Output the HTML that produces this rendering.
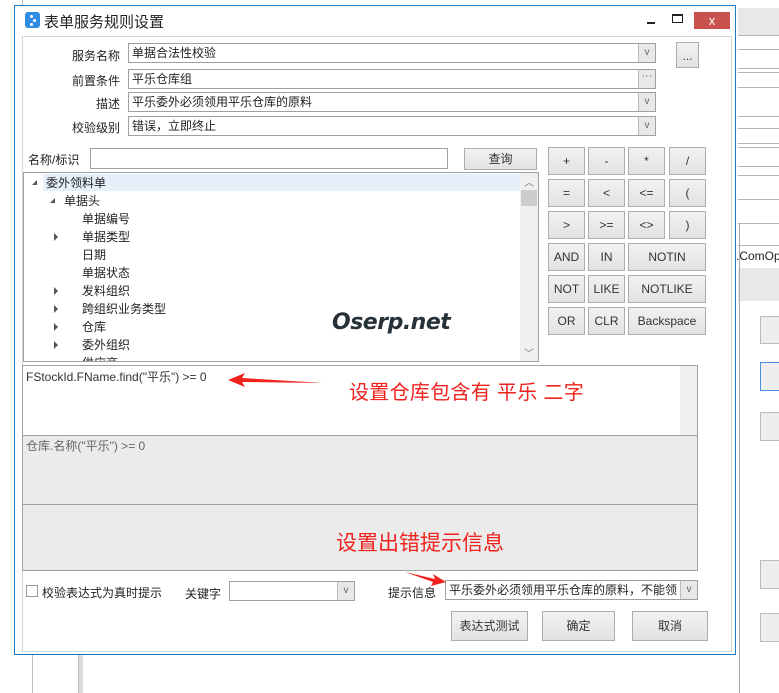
<!DOCTYPE html>
<html><head><meta charset="utf-8"><style>
*{box-sizing:border-box;margin:0;padding:0}
body{width:779px;height:693px;position:relative;overflow:hidden;background:#fff;font-family:"Liberation Sans","Noto Sans CJK SC",sans-serif;font-size:12px;color:#222}
.a{position:absolute}
.btn{position:absolute;border:1px solid #adadad;background:linear-gradient(#f2f2f2,#e2e2e2);text-align:center;font-size:12px;color:#333}
.in{position:absolute;border:1px solid #a0a0a0;background:#fff;font-size:12px;padding-left:3px;line-height:18px}
.dd{position:absolute;right:0;top:0;bottom:0;width:17px;background:#e8e8e8;border-left:1px solid #bbb;color:#666;font-size:10px;text-align:center;line-height:18px}
.lbl{position:absolute;font-size:12px;text-align:right;width:70px}
.tr{position:absolute;font-size:12px;line-height:18px}
.tri{position:absolute;width:0;height:0;border-top:4px solid transparent;border-bottom:4px solid transparent;border-left:4px solid #555}
.hl{position:absolute;height:1px;background:#b5b5b5}
.red{position:absolute;color:#f0221e}
</style></head><body>
<div class="a" style="left:22px;top:0;width:1px;height:8px;background:#bbb"></div>
<div class="a" style="left:32px;top:655px;width:1px;height:38px;background:#bbb"></div>
<div class="a" style="left:78px;top:655px;width:5px;height:38px;background:#ddd;border-left:1px solid #bbb"></div>
<div class="a" style="left:738px;top:8px;width:41px;height:28px;background:#e8e8e8"></div>
<div class="hl" style="left:738px;top:35px;width:41px"></div>
<div class="hl" style="left:738px;top:49px;width:41px"></div>
<div class="hl" style="left:738px;top:68px;width:41px"></div>
<div class="hl" style="left:738px;top:72px;width:41px"></div>
<div class="hl" style="left:738px;top:87px;width:41px"></div>
<div class="hl" style="left:738px;top:116px;width:41px"></div>
<div class="hl" style="left:738px;top:128px;width:41px"></div>
<div class="hl" style="left:738px;top:143px;width:41px"></div>
<div class="hl" style="left:738px;top:147px;width:41px"></div>
<div class="hl" style="left:738px;top:166px;width:41px"></div>
<div class="hl" style="left:738px;top:175px;width:41px"></div>
<div class="hl" style="left:738px;top:199px;width:41px"></div>
<div class="hl" style="left:738px;top:223px;width:41px"></div>
<div class="hl" style="left:738px;top:245px;width:41px"></div>
<div class="a" style="left:736px;top:249px;font-size:12px;color:#222">.ComOp</div>
<div class="a" style="left:738px;top:268px;width:41px;height:33px;background:#e8e8e8"></div>
<div class="a" style="left:739px;top:223px;width:1px;height:470px;background:#aaa"></div>
<div class="a" style="left:760px;top:316px;width:30px;height:28px;border:1px solid #bbb;background:#eee"></div>
<div class="a" style="left:760px;top:362px;width:30px;height:29px;border:1px solid #4a90e2;background:#eee"></div>
<div class="a" style="left:760px;top:412px;width:30px;height:29px;border:1px solid #bbb;background:#eee"></div>
<div class="a" style="left:760px;top:560px;width:30px;height:29px;border:1px solid #bbb;background:#eee"></div>
<div class="a" style="left:760px;top:613px;width:30px;height:29px;border:1px solid #bbb;background:#eee"></div>

<div class="a" style="left:14px;top:5px;width:722px;height:650px;border:1px solid #1979ca;background:#fff"></div>
<div class="a" style="left:25px;top:12px;width:15px;height:16px;background:#2f8de4;border-radius:3px"></div>
<div class="a" style="left:30px;top:15px;width:3px;height:3px;background:#fff;border-radius:2px"></div>
<div class="a" style="left:33px;top:19px;width:3px;height:3px;background:#fff;border-radius:2px"></div>
<div class="a" style="left:30px;top:23px;width:3px;height:3px;background:#fff;border-radius:2px"></div>
<div class="a" style="left:44px;top:11px;font-size:15px;color:#222">表单服务规则设置</div>
<div class="a" style="left:647px;top:22px;width:8px;height:2px;background:#222"></div>
<div class="a" style="left:672px;top:14px;width:11px;height:9px;border:1px solid #222;border-top-width:2px"></div>
<div class="a" style="left:694px;top:12px;width:36px;height:17px;background:#c9524f;color:#fff;text-align:center;font-size:13px;line-height:17px">x</div>
<div class="a" style="left:22px;top:36px;width:710px;height:616px;border:1px solid #d6d6d6;background:#fff"></div>

<div class="lbl" style="left:50px;top:47px">服务名称</div>
<div class="lbl" style="left:50px;top:72px">前置条件</div>
<div class="lbl" style="left:50px;top:95px">描述</div>
<div class="lbl" style="left:50px;top:119px">校验级别</div>
<div class="in" style="left:128px;top:43px;width:528px;height:20px">单据合法性校验<div class="dd">v</div></div>
<div class="in" style="left:128px;top:69px;width:528px;height:20px">平乐仓库组<div class="dd" style="line-height:12px;font-size:11px">···</div></div>
<div class="in" style="left:128px;top:92px;width:528px;height:20px">平乐委外必须领用平乐仓库的原料<div class="dd">v</div></div>
<div class="in" style="left:128px;top:116px;width:528px;height:20px">错误，立即终止<div class="dd">v</div></div>
<div class="btn" style="left:676px;top:42px;width:23px;height:26px;line-height:26px">...</div>

<div class="a" style="left:28px;top:151px">名称/标识</div>
<div class="in" style="left:90px;top:148px;width:358px;height:21px"></div>
<div class="btn" style="left:464px;top:148px;width:73px;height:22px;line-height:20px">查询</div>

<div class="btn" style="left:548px;top:147px;width:37px;height:28px;line-height:27px">+</div>
<div class="btn" style="left:588px;top:147px;width:37px;height:28px;line-height:27px">-</div>
<div class="btn" style="left:628px;top:147px;width:37px;height:28px;line-height:27px">*</div>
<div class="btn" style="left:669px;top:147px;width:37px;height:28px;line-height:27px">/</div>
<div class="btn" style="left:548px;top:179px;width:37px;height:28px;line-height:27px">=</div>
<div class="btn" style="left:588px;top:179px;width:37px;height:28px;line-height:27px">&lt;</div>
<div class="btn" style="left:628px;top:179px;width:37px;height:28px;line-height:27px">&lt;=</div>
<div class="btn" style="left:669px;top:179px;width:37px;height:28px;line-height:27px">(</div>
<div class="btn" style="left:548px;top:211px;width:37px;height:28px;line-height:27px">&gt;</div>
<div class="btn" style="left:588px;top:211px;width:37px;height:28px;line-height:27px">&gt;=</div>
<div class="btn" style="left:628px;top:211px;width:37px;height:28px;line-height:27px">&lt;&gt;</div>
<div class="btn" style="left:669px;top:211px;width:37px;height:28px;line-height:27px">)</div>
<div class="btn" style="left:548px;top:243px;width:37px;height:28px;line-height:27px">AND</div>
<div class="btn" style="left:588px;top:243px;width:37px;height:28px;line-height:27px">IN</div>
<div class="btn" style="left:628px;top:243px;width:78px;height:28px;line-height:27px">NOTIN</div>
<div class="btn" style="left:548px;top:275px;width:37px;height:28px;line-height:27px">NOT</div>
<div class="btn" style="left:588px;top:275px;width:37px;height:28px;line-height:27px">LIKE</div>
<div class="btn" style="left:628px;top:275px;width:78px;height:28px;line-height:27px">NOTLIKE</div>
<div class="btn" style="left:548px;top:307px;width:37px;height:28px;line-height:27px">OR</div>
<div class="btn" style="left:588px;top:307px;width:37px;height:28px;line-height:27px">CLR</div>
<div class="btn" style="left:628px;top:307px;width:78px;height:28px;line-height:27px">Backspace</div>

<div class="a" style="left:23px;top:172px;width:516px;height:190px;border:1px solid #a0a0a0;background:#fff;overflow:hidden">
 <div class="a" style="left:19px;top:1px;width:477px;height:17px;background:#e5f0fb"></div>
 <div class="a" style="left:496px;top:0;width:18px;height:188px;background:#f0f0f0"></div>
 <div class="a" style="left:497px;top:17px;width:16px;height:16px;background:#cdcdcd"></div>
 <div class="a" style="left:500px;top:1px;font-size:10px;color:#777">︿</div>
 <div class="a" style="left:500px;top:172px;font-size:10px;color:#777">﹀</div>
 <div class="tr" style="left:22px;top:1px">委外领料单</div>
 <div class="tr" style="left:40px;top:19px">单据头</div>
 <div class="tr" style="left:58px;top:37px">单据编号</div>
 <div class="tr" style="left:58px;top:55px">单据类型</div>
 <div class="tr" style="left:58px;top:73px">日期</div>
 <div class="tr" style="left:58px;top:91px">单据状态</div>
 <div class="tr" style="left:58px;top:109px">发料组织</div>
 <div class="tr" style="left:58px;top:127px">跨组织业务类型</div>
 <div class="tr" style="left:58px;top:145px">仓库</div>
 <div class="tr" style="left:58px;top:163px">委外组织</div>
 <div class="tr" style="left:58px;top:181px">供应商</div>
 <div class="a" style="left:8px;top:7px;width:0;height:0;border-left:5px solid transparent;border-bottom:5px solid #555"></div>
 <div class="a" style="left:26px;top:25px;width:0;height:0;border-left:5px solid transparent;border-bottom:5px solid #555"></div>
 <div class="tri" style="left:30px;top:60px"></div>
 <div class="tri" style="left:30px;top:114px"></div>
 <div class="tri" style="left:30px;top:132px"></div>
 <div class="tri" style="left:30px;top:150px"></div>
 <div class="tri" style="left:30px;top:168px"></div>
 <div class="a" style="left:308px;top:137px;font-size:22px;font-style:italic;font-weight:bold;color:#263238;font-family:'DejaVu Sans',sans-serif;letter-spacing:-0.5px">Oserp.net</div>
</div>

<div class="a" style="left:22px;top:365px;width:676px;height:71px;border:1px solid #a0a0a0;background:#fff">
 <div class="a" style="left:657px;top:0;width:17px;height:69px;background:#f0f0f0"></div>
 <div class="a" style="left:3px;top:2px;font-size:12px;color:#333">FStockId.FName.find("平乐") &gt;= 0</div>
</div>
<svg class="a" style="left:225px;top:370px" width="100" height="20"><polygon points="3,10 20,3 17,8 98,13 17,12 20,17" fill="#f0221e"/></svg>
<div class="red" style="left:349px;top:376px;font-size:20px;letter-spacing:0.3px">设置仓库包含有 平乐 二字</div>
<div class="a" style="left:22px;top:435px;width:676px;height:70px;border:1px solid #a0a0a0;background:#ebebeb">
 <div class="a" style="left:3px;top:1px;font-size:12px;color:#666">仓库.名称("平乐") &gt;= 0</div>
</div>
<div class="a" style="left:22px;top:504px;width:676px;height:67px;border:1px solid #a0a0a0;background:#ebebeb"></div>
<div class="red" style="left:336px;top:527px;font-size:21px">设置出错提示信息</div>

<div class="a" style="left:26px;top:585px;width:12px;height:12px;border:1px solid #999;background:#fff"></div>
<div class="a" style="left:42px;top:584px">校验表达式为真时提示</div>
<div class="a" style="left:185px;top:585px">关键字</div>
<div class="in" style="left:229px;top:581px;width:126px;height:20px"><div class="dd">v</div></div>
<div class="a" style="left:388px;top:584px">提示信息</div>
<div class="in" style="left:445px;top:580px;width:253px;height:20px">平乐委外必须领用平乐仓库的原料，不能领<div class="dd">v</div></div>
<svg class="a" style="left:405px;top:570px" width="42" height="20"><polygon points="0,2 30,9 28,4 41,12 26,16 28,12" fill="#f0221e"/></svg>
<div class="btn" style="left:451px;top:611px;width:77px;height:30px;line-height:28px">表达式测试</div>
<div class="btn" style="left:542px;top:611px;width:73px;height:30px;line-height:28px">确定</div>
<div class="btn" style="left:632px;top:611px;width:76px;height:30px;line-height:28px">取消</div>
</body></html>
